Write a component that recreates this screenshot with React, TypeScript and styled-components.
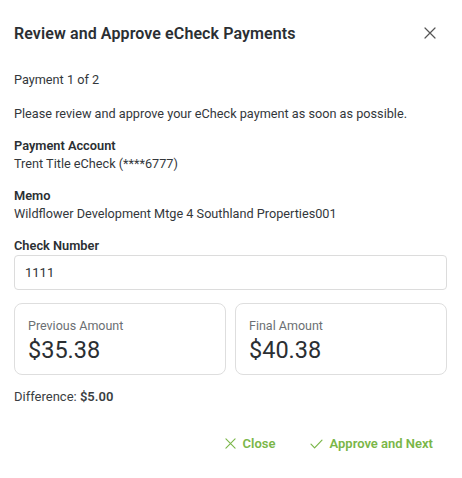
import React from "react";
import styled, { createGlobalStyle } from "styled-components";

const GlobalStyle = createGlobalStyle`
  html, body {
    margin: 0;
    padding: 0;
    background: #ffffff;
  }
  body {
    font-family: "Roboto", "Noto Sans", "Liberation Sans", sans-serif;
    color: #2e3236;
    -webkit-font-smoothing: antialiased;
  }
`;

const green = "#7ab648";

const Dialog = styled.div`
  width: 462px;
  height: 478px;
  box-sizing: border-box;
  padding: 22px 15px 0 14px;
  display: flex;
  flex-direction: column;
`;

const Header = styled.div`
  display: flex;
  align-items: center;
  justify-content: space-between;
  height: 22px;
`;

const Title = styled.h1`
  margin: 0;
  font-size: 16px;
  font-weight: 600;
  color: #2b2f33;
  letter-spacing: 0.1px;
`;

const IconButton = styled.button`
  border: 0;
  background: none;
  padding: 0;
  margin-right: 10px;
  width: 14px;
  height: 14px;
  display: flex;
  align-items: center;
  justify-content: center;
  cursor: pointer;
`;

const Text = styled.p<{ $top?: number }>`
  margin: ${({ $top }) => $top ?? 0}px 0 0;
  font-size: 12.7px;
  line-height: 18px;
  color: #33373b;
`;

const Field = styled.div<{ $top: number }>`
  margin-top: ${({ $top }) => $top}px;
  display: flex;
  flex-direction: column;
`;

const Label = styled.div`
  font-size: 12.8px;
  line-height: 19px;
  font-weight: 600;
  color: #2b2f33;
`;

const Input = styled.input`
  box-sizing: border-box;
  width: 100%;
  height: 35px;
  border: 1px solid #dcdcdc;
  border-radius: 4px;
  padding: 0 10px;
  font-family: inherit;
  font-size: 13px;
  color: #2e3236;
  outline: none;
`;

const Cards = styled.div`
  margin-top: 13px;
  display: grid;
  grid-template-columns: 1fr 1fr;
  gap: 9px;
`;

const Card = styled.div`
  box-sizing: border-box;
  height: 72px;
  border: 1px solid #dedede;
  border-radius: 8px;
  padding: 13px 13px 0;
  display: flex;
  flex-direction: column;
`;

const CardLabel = styled.div`
  font-size: 12.5px;
  line-height: 17px;
  color: #6b6f73;
`;

const Amount = styled.div`
  margin-top: 3px;
  font-size: 23.5px;
  line-height: 27px;
  color: #2b2f33;
`;

const Difference = styled.div`
  margin-top: 14px;
  font-size: 13px;
  line-height: 16px;
  color: #3a3e42;
  b {
    font-weight: 600;
  }
`;

const Footer = styled.div`
  margin-top: 31px;
  display: flex;
  justify-content: flex-end;
  gap: 34px;
  padding-right: 14px;
`;

const Action = styled.button`
  border: 0;
  background: none;
  padding: 0;
  display: flex;
  align-items: center;
  gap: 7px;
  font-family: inherit;
  font-size: 13px;
  font-weight: 600;
  color: ${green};
  cursor: pointer;
`;

const CloseIcon = ({ size = 12, color = "#555" }: { size?: number; color?: string }) => (
  <svg width={size} height={size} viewBox="0 0 12 12" fill="none">
    <path d="M1 1L11 11M11 1L1 11" stroke={color} strokeWidth="1.2" strokeLinecap="round" />
  </svg>
);

const CheckIcon = () => (
  <svg width="13" height="10" viewBox="0 0 13 10" fill="none">
    <path d="M1 5.2L4.6 8.8L12 1.2" stroke={green} strokeWidth="1.2" strokeLinecap="round" strokeLinejoin="round" />
  </svg>
);

export default function App() {
  return (
    <>
      <GlobalStyle />
      <Dialog>
        <Header>
          <Title>Review and Approve eCheck Payments</Title>
          <IconButton aria-label="Close">
            <CloseIcon />
          </IconButton>
        </Header>
        <Text $top={27}>Payment 1 of 2</Text>
        <Text $top={16}>Please review and approve your eCheck payment as soon as possible.</Text>
        <Field $top={13}>
          <Label>Payment Account</Label>
          <Text>Trent Title eCheck (****6777)</Text>
        </Field>
        <Field $top={13}>
          <Label>Memo</Label>
          <Text>Wildflower Development Mtge 4 Southland Properties001</Text>
        </Field>
        <Field $top={13}>
          <Label>Check Number</Label>
          <Input defaultValue="1111" />
        </Field>
        <Cards>
          <Card>
            <CardLabel>Previous Amount</CardLabel>
            <Amount>$35.38</Amount>
          </Card>
          <Card>
            <CardLabel>Final Amount</CardLabel>
            <Amount>$40.38</Amount>
          </Card>
        </Cards>
        <Difference>
          Difference: <b>$5.00</b>
        </Difference>
        <Footer>
          <Action>
            <CloseIcon size={11} color={green} />
            Close
          </Action>
          <Action>
            <CheckIcon />
            Approve and Next
          </Action>
        </Footer>
      </Dialog>
    </>
  );
}
